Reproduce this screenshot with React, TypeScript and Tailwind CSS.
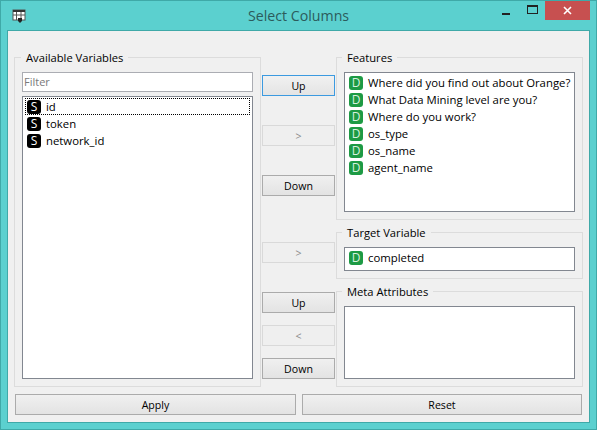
import React from 'react';

const FONT = "font-['Open_Sans','Noto_Sans',sans-serif]";

const VarIcon: React.FC<{ kind: 'S' | 'D' }> = ({ kind }) => (
  <span
    className={`flex h-[14px] w-[14px] shrink-0 items-center justify-center rounded-[3px] text-[12px] leading-none ${
      kind === 'S' ? 'bg-black text-white' : 'bg-[#1d9a44] text-[#d8f0df]'
    }`}
  >
    {kind}
  </span>
);

const VarRow: React.FC<{ kind: 'S' | 'D'; name: string; focused?: boolean }> = ({ kind, name, focused }) => (
  <div
    className={`flex h-[17px] items-center gap-[5px] pl-[2px] text-[11.35px] text-black ${
      focused ? 'outline-1 outline-dotted outline-black -outline-offset-1' : ''
    }`}
  >
    <VarIcon kind={kind} />
    <span className="whitespace-nowrap">{name}</span>
  </div>
);

const GroupBox: React.FC<{ title: string; className?: string; titleClass?: string; children: React.ReactNode }> = ({
  title,
  className = '',
  titleClass = 'left-[6px]',
  children,
}) => (
  <div className={`relative border border-[#dcdcdc] px-[7px] pt-[14px] pb-[7px] ${className}`}>
    <span className={`absolute -top-[7px] bg-[#f0f0f0] px-[5px] text-[11.2px] leading-[14px] text-black ${titleClass}`}>{title}</span>
    {children}
  </div>
);

const Btn: React.FC<{ label: string; disabled?: boolean; focused?: boolean; className?: string }> = ({ label, disabled, focused, className = '' }) => (
  <button
    className={`flex h-[21px] items-center justify-center border pt-[2px] text-[10.6px] ${
      disabled
        ? 'border-[#d9d9d9] bg-[#efefef] text-[#8a8a8a]'
        : focused
          ? 'border-[#3c9ae0] bg-gradient-to-b from-[#f1f1f1] to-[#e4e4e4] text-black'
          : 'border-[#ababab] bg-gradient-to-b from-[#f0f0f0] to-[#e3e3e3] text-black'
    } ${className}`}
  >
    {label}
  </button>
);

const ListBox: React.FC<{ className?: string; children?: React.ReactNode }> = ({ className = '', children }) => (
  <div className={`border border-[#828790] bg-white px-[2px] pt-[1px] ${className}`}>{children}</div>
);

export default function App() {
  return (
    <div className={`flex h-[430px] w-[597px] flex-col border border-[#3fa9a8] bg-[#5bd0cf] ${FONT}`}>
      <div className="relative flex h-[29px] shrink-0 items-center justify-center">
        <svg className="absolute top-[8px] left-[11px]" width="14" height="14" viewBox="0 0 14 14">
          <rect x="1" y="1" width="12" height="10" fill="#fff" stroke="#555" />
          <rect x="1" y="1" width="12" height="2" fill="#333" />
          <path d="M4.5 3v8M9 3v8M1 6h12" stroke="#555" />
          <path d="M6 9h4v3l-2 2-2-2z" fill="#222" />
        </svg>
        <span className="text-[14.2px] text-[#2c5b5c]">Select Columns</span>
        <div className="absolute top-0 right-[6px] flex items-start">
          <div className="flex h-[19px] w-[26px] items-center justify-center">
            <div className="mt-[7px] h-[2px] w-[8px] bg-[#222]" />
          </div>
          <div className="flex h-[19px] w-[26px] items-center justify-center">
            <div className="mb-[3px] h-[9px] w-[11px] border border-t-2 border-[#222]" />
          </div>
          <div className="flex h-[19px] w-[45px] items-center justify-center bg-[#c75050]">
            <svg width="9" height="9" viewBox="0 0 9 9">
              <path d="M1 1l7 7M8 1l-7 7" stroke="#fff" strokeWidth="1.6" />
            </svg>
          </div>
        </div>
      </div>
      <div className="mx-[6px] flex h-[393px] flex-col border border-[#3fa9a8] bg-[#f0f0f0] px-[6px] pt-[26px]">
        <div className="flex h-[330px] shrink-0">
          <GroupBox title="Available Variables" className="flex w-[247px] flex-col gap-[4px]">
            <div className="flex h-[20px] items-center border border-[#abadb3] bg-white pl-[1px] text-[11px] text-[#7a7a7a]">Filter</div>
            <ListBox className="flex-1">
              <VarRow kind="S" name="id" focused />
              <VarRow kind="S" name="token" />
              <VarRow kind="S" name="network_id" />
            </ListBox>
          </GroupBox>
          <div className="ml-[1px] flex w-[73px] flex-col pt-[18px]">
            <Btn label="Up" focused />
            <Btn label=">" disabled className="mt-[29px]" />
            <Btn label="Down" className="mt-[29px] mb-[1px]" />
            <Btn label=">" disabled className="mt-[45px]" />
            <Btn label="Up" className="mt-[29px]" />
            <Btn label="<" disabled className="mt-[12px]" />
            <Btn label="Down" className="mt-[12px]" />
          </div>
          <div className="ml-[1px] flex w-[247px] flex-col">
            <GroupBox title="Features" titleClass="left-[5px]" className="flex h-[163px] flex-col">
              <ListBox className="flex-1">
                <VarRow kind="D" name="Where did you find out about Orange?" />
                <VarRow kind="D" name="What Data Mining level are you?" />
                <VarRow kind="D" name="Where do you work?" />
                <VarRow kind="D" name="os_type" />
                <VarRow kind="D" name="os_name" />
                <VarRow kind="D" name="agent_name" />
              </ListBox>
            </GroupBox>
            <GroupBox title="Target Variable" titleClass="left-[5px]" className="mt-[12px] flex h-[47px] flex-col">
              <ListBox className="flex-1">
                <VarRow kind="D" name="completed" />
              </ListBox>
            </GroupBox>
            <GroupBox title="Meta Attributes" titleClass="left-[5px]" className="mt-[12px] flex flex-1 flex-col">
              <ListBox className="flex-1" />
            </GroupBox>
          </div>
        </div>
        <div className="mt-[7px] ml-[1px] flex gap-[6px]">
          <Btn label="Apply" className="w-[281px]" />
          <Btn label="Reset" className="w-[280px]" />
        </div>
      </div>
    </div>
  );
}
